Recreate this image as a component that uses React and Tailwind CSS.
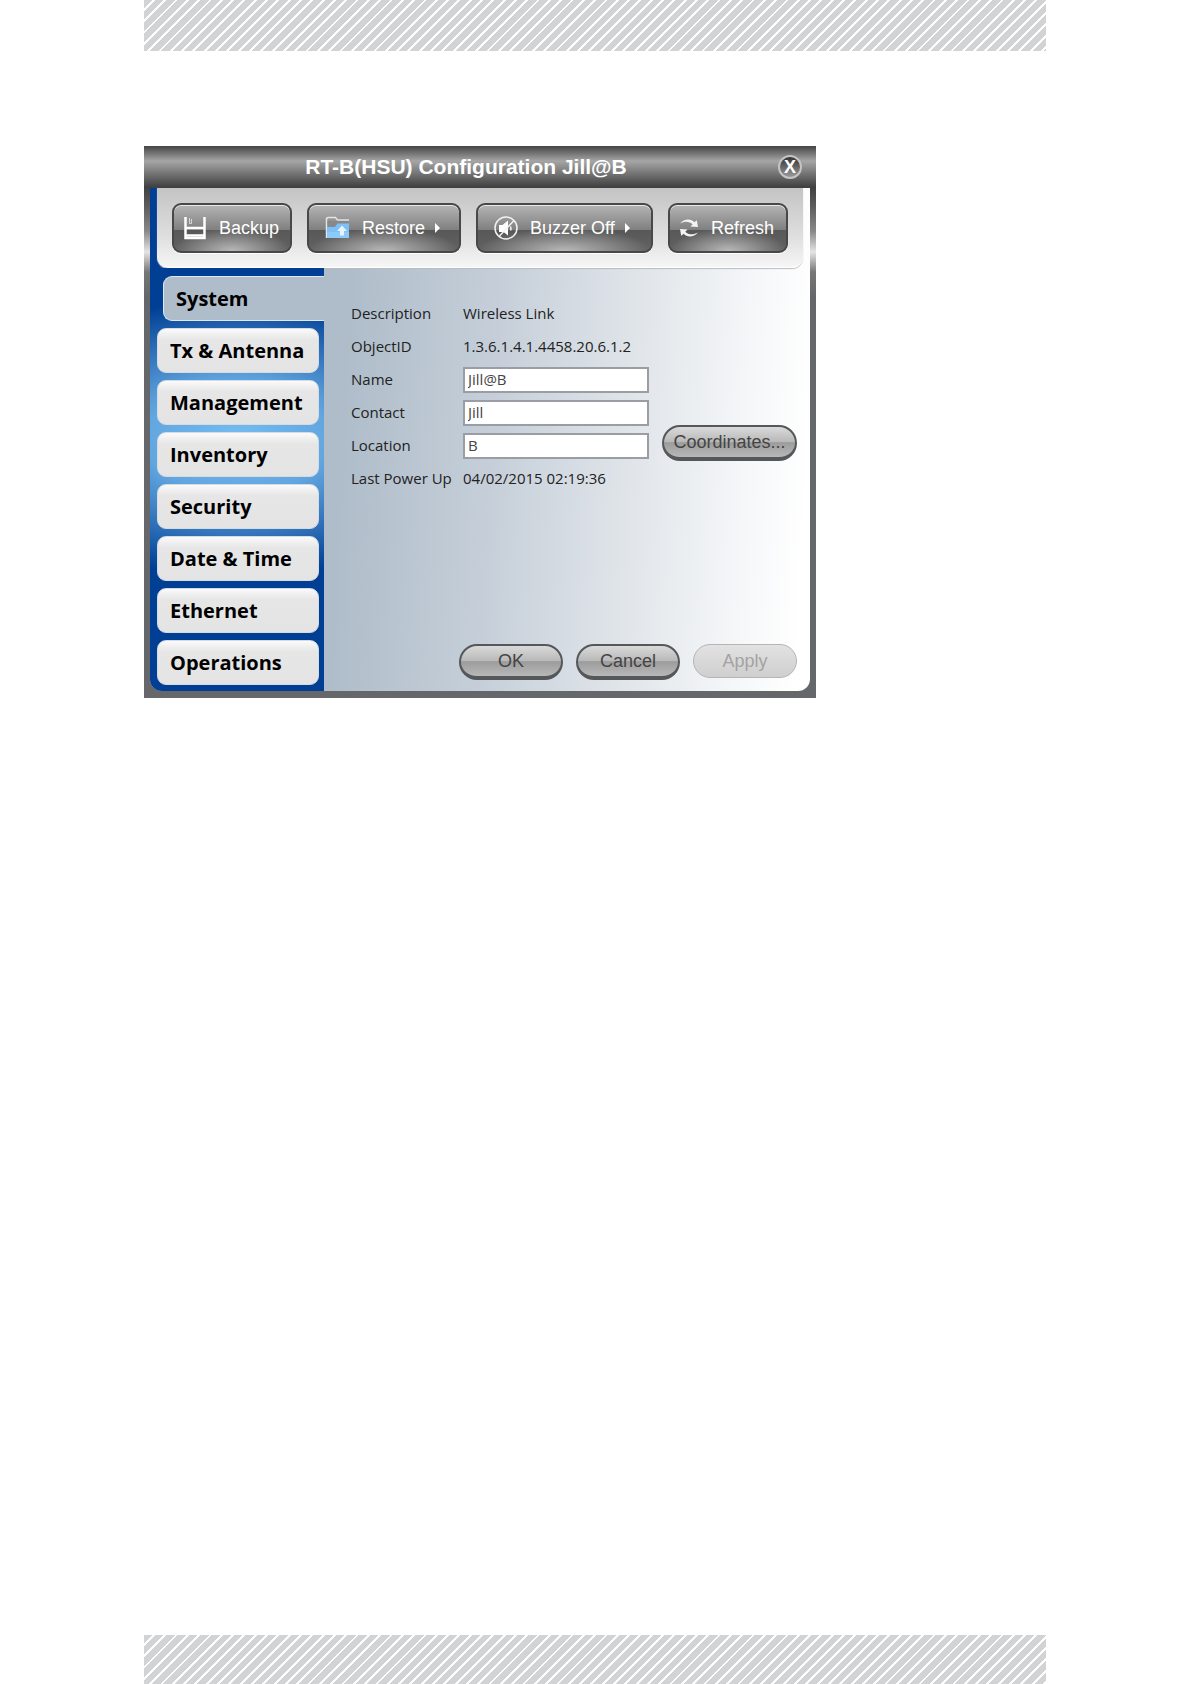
const stripes =
  "bg-[repeating-linear-gradient(135deg,#d1d3d4_0px,#d1d3d4_6px,#ffffff_6px,#ffffff_8px)]";

function Stripes({ className }) {
  return <div className={`mx-36 ${stripes} ${className}`} aria-hidden="true" />;
}

function FloppyIcon() {
  return (
    <svg width="24" height="24" viewBox="0 0 24 24" fill="none" stroke="#fff" aria-hidden="true">
      <path d="M2.500 1V22H21.500V1" strokeWidth="2.500" />
      <path d="M3 12H21M3 19.500H21" strokeWidth="2.500" />
      <path d="M6.500 2V7.500H8.500V3" strokeWidth="1" stroke="#d8d8d8" />
    </svg>
  );
}

function FolderUpIcon() {
  return (
    <svg width="25" height="24" viewBox="0 0 25 24" aria-hidden="true">
      <path d="M1.500 22V3q0-1.500 2-1.500h7l2 2.500h11.500" fill="none" stroke="#e4e4e4" strokeWidth="1.500" />
      <path d="M2.500 5h21v4h-21z" fill="#86898c" />
      <path d="M2 11h8l2.500-3.500H24V22H2z" fill="#7cc0f7" />
      <path d="M2 16h22v6H2z" fill="#9ad0fa" opacity=".6" />
      <path d="M17 9.500l5 5.500h-3v4.500h-4V15h-3z" fill="#e6f2fc" />
    </svg>
  );
}

function MuteIcon() {
  return (
    <svg width="24" height="24" viewBox="0 0 24 24" fill="none" stroke="#f2f2f2" strokeWidth="1.500" aria-hidden="true">
      <circle cx="12" cy="12" r="11" />
      <path d="M5 9h3.500l5.500-4.500v15L9.500 16H5z" fill="#fff" stroke="none" />
      <path d="M20 4.500 5.500 20" />
      <path d="M16.500 10.500q1 2 0 4" />
    </svg>
  );
}

function RefreshIcon() {
  return (
    <svg width="20" height="18" viewBox="0 0 20 18" fill="#f4f4f4" aria-hidden="true">
      <path d="M1 4.500C5-.5 12-.8 15.300 3.200L17.800 1.200 19 8l-7.500-.5 2.200-2.200C10.500 2 5.500 2 1 4.500z" />
      <path d="M19 13.500c-4 5-11 5.300-14.300 1.300L2.200 16.800 1 10l7.500.5-2.200 2.200C9.500 16 14.500 16 19 13.500z" />
    </svg>
  );
}

function ToolButton({ icon, label, menu, className }) {
  return (
    <button
      type="button"
      className={`flex h-[50px] items-center rounded-[9px] border-2 border-[#484848] bg-[radial-gradient(ellipse_50%_50%_at_50%_100%,#b8b8b8_0%,#b8b8b800_100%),linear-gradient(180deg,#b4b4b4_0%,#808080_54%,#585858_55%,#626262_100%)] font-['Liberation_Sans',Arial,sans-serif] text-lg text-white shadow-[inset_0_1px_0_#e8e8e8,0_1px_0_#ffffff] ${className}`}
    >
      {icon}
      <span>{label}</span>
      {menu && (
        <svg className="ml-2.5" width="5" height="10" viewBox="0 0 5 10" fill="#fff" aria-hidden="true">
          <path d="M0 0l5 5-5 5z" />
        </svg>
      )}
    </button>
  );
}

function PillButton({ children, disabled, className }) {
  const look = disabled
    ? "h-[34px] mb-0.5 border border-[#b5b5b5] bg-[linear-gradient(180deg,#e2e2e2,#cfcfcf)] text-[#a3a3a3]"
    : "h-9 border-2 border-b-4 border-[#55585a] bg-[linear-gradient(180deg,#dadada_0%,#b8b8b8_50%,#9c9c9c_52%,#b8b8b8_100%)] text-[#444444]";
  return (
    <button
      type="button"
      disabled={disabled}
      className={`flex items-center justify-center rounded-full font-['Liberation_Sans',Arial,sans-serif] text-lg ${look} ${className}`}
    >
      {children}
    </button>
  );
}

const tabs = ["Tx & Antenna", "Management", "Inventory", "Security", "Date & Time", "Ethernet", "Operations"];

const rows = [
  { label: "Description", value: "Wireless Link" },
  { label: "ObjectID", value: "1.3.6.1.4.1.4458.20.6.1.2" },
  { label: "Name", value: "Jill@B", edit: true },
  { label: "Contact", value: "Jill", edit: true },
  { label: "Location", value: "B", edit: true, coordinates: true },
  { label: "Last Power Up", value: "04/02/2015 02:19:36" },
];

function Row({ label, value, edit, coordinates }) {
  const id = label.toLowerCase().replace(/ /g, "-");
  return (
    <div className="flex h-[33px] items-center">
      {edit ? (
        <label htmlFor={id} className="w-28">{label}</label>
      ) : (
        <span className="w-28">{label}</span>
      )}
      {edit ? (
        <input
          id={id}
          defaultValue={value}
          className="h-[26px] w-[186px] border-2 border-[#9a9da3] bg-white px-[3px] pb-0.5 text-[#444444]"
        />
      ) : (
        <span>{value}</span>
      )}
      {coordinates && <PillButton className="mb-1.5 ml-[13px] w-[135px]">Coordinates...</PillButton>}
    </div>
  );
}

function Dialog() {
  return (
    <section
      aria-labelledby="dialog-title"
      className="w-full max-w-[672px] bg-[linear-gradient(180deg,#444444_0px,#a6a6a6_15px,#8a8a8a_22px,#404040_41px,#5c5c5c_60px,#888888_85px,#e4e4e4_106px,#777777_126px,#66676a_150px)] px-1.5 pb-[7px]"
    >
      <header className="relative flex h-[42px] items-center justify-center">
        <h1 id="dialog-title" className="pr-7 font-['Liberation_Sans',Arial,sans-serif] text-[21px] font-bold text-white">
          RT-B(HSU) Configuration Jill@B
        </h1>
        <button
          type="button"
          aria-label="Close"
          className="absolute right-2 top-[9px] flex size-6 items-center justify-center rounded-full border-2 border-[#c4c4c4] bg-[linear-gradient(180deg,#333333,#999999)] font-['Liberation_Sans',Arial,sans-serif] text-lg font-bold text-white"
        >
          X
        </button>
      </header>

      <div className="overflow-hidden rounded-b-xl bg-[linear-gradient(93deg,#afbdca_30%,#c6cfd9_52%,#e4e8ec_75%,#f4f6f8_88%,#ffffff_98%)]">
        <div className="bg-[linear-gradient(90deg,#003f94_50%,transparent_50%)] pl-[7px]">
          <div className="mr-[7px] flex h-20 gap-[15px] rounded-b-[11px] border-b border-white bg-[linear-gradient(180deg,#c4c4c4_0%,#dedede_60%,#f6f6f6_100%)] pl-[15px] pt-[15px] shadow-[0_1px_1px_#b8bcc2]">
            <ToolButton className="w-[120px] gap-3 pl-[9px]" icon={<FloppyIcon />} label="Backup" />
            <ToolButton className="w-[154px] pl-4 [&>span]:ml-3" icon={<FolderUpIcon />} label="Restore" menu />
            <ToolButton className="w-[177px] pl-4 [&>span]:ml-3" icon={<MuteIcon />} label="Buzzer Off" menu />
            <ToolButton className="w-[120px] gap-3 pl-[9px]" icon={<RefreshIcon />} label="Refresh" />
          </div>
        </div>

        <div className="flex">
          <nav className="flex w-[174px] shrink-0 flex-col gap-[7px] bg-[radial-gradient(ellipse_230px_140px_at_50%_170px,#74bcf2_0%,#62a6e0_40%,#003f94_100%)] pb-1.5 pl-[7px] pr-[5px] pt-2 font-['Open_Sans','Noto_Sans',sans-serif] text-xl font-bold text-black">
            <button
              type="button"
              aria-current="page"
              className="-mr-[5px] ml-1.5 h-[45px] rounded-l-[9px] border border-r-0 border-[#dfe8f2] bg-[#afbdca] pl-3 text-left"
            >
              System
            </button>
            {tabs.map((tab) => (
              <button
                key={tab}
                type="button"
                className="h-[45px] rounded-[9px] border border-[#d4dbe3] bg-[linear-gradient(180deg,#fafafa_0%,#e6e6e6_25%,#e4e4e4_100%)] pl-3 text-left"
              >
                {tab}
              </button>
            ))}
          </nav>

          <form className="flex flex-1 flex-col justify-between pb-[11px] pl-[27px] pr-[13px] pt-[29px] font-['Open_Sans','Noto_Sans',sans-serif] text-[15px] text-[#222222]">
            <div>
              {rows.map((row) => (
                <Row key={row.label} {...row} />
              ))}
            </div>
            <div className="flex justify-end gap-[13px]">
              <PillButton className="w-[104px]">OK</PillButton>
              <PillButton className="w-[104px]">Cancel</PillButton>
              <PillButton className="w-[104px]" disabled>Apply</PillButton>
            </div>
          </form>
        </div>
      </div>
    </section>
  );
}

export default function App() {
  return (
    <div className="flex min-h-screen flex-col bg-white">
      <Stripes className="h-[51px]" />
      <main className="flex-1 px-36 pt-[95px]">
        <Dialog />
      </main>
      <Stripes className="h-[49px]" />
    </div>
  );
}
